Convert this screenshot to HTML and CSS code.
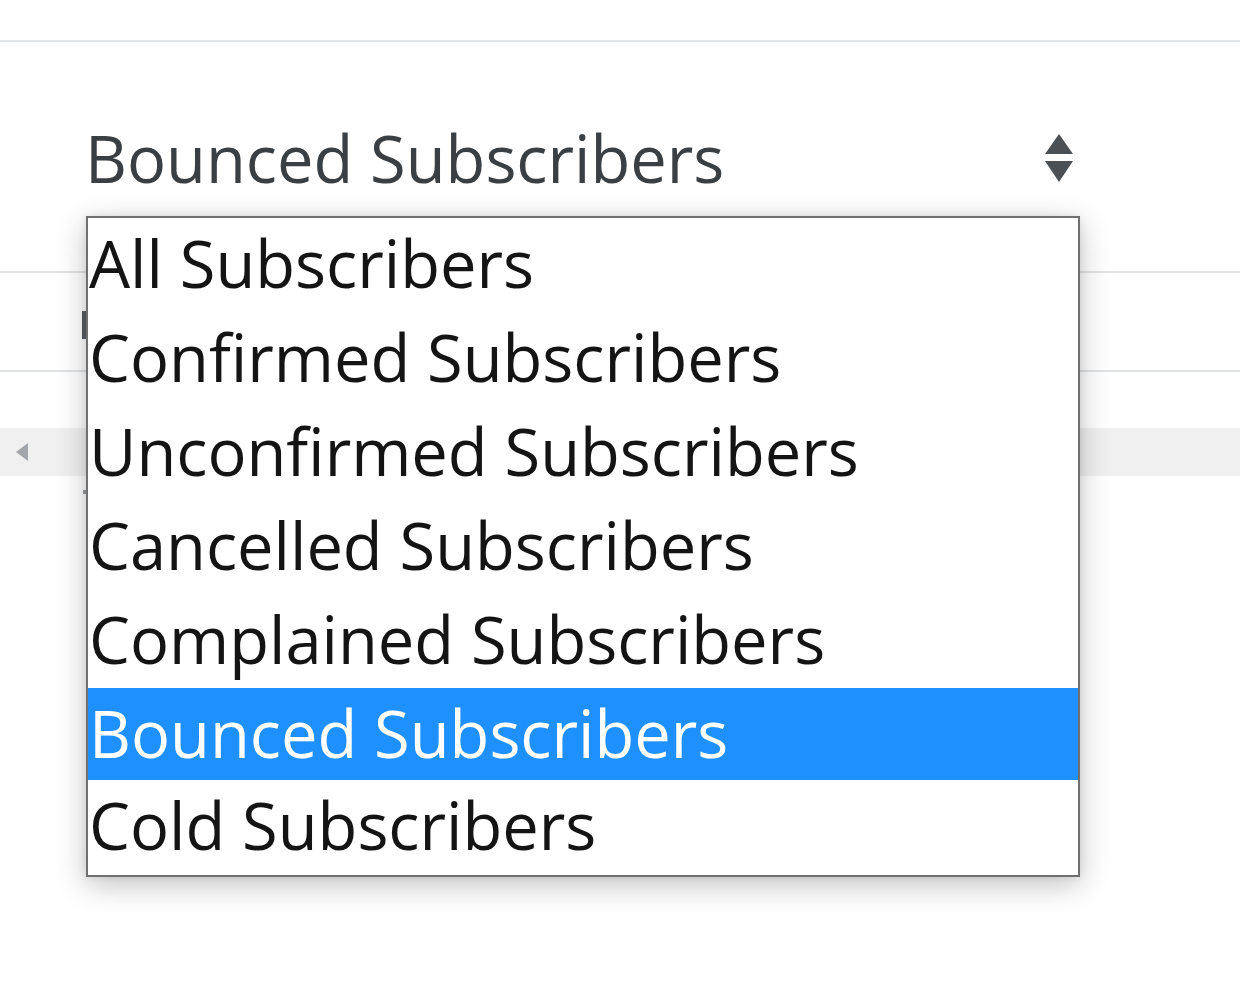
FILE: index.html
```html
<!DOCTYPE html>
<html lang="en">
<head>
  <meta charset="UTF-8">
  <title>Subscribers filter</title>
  <link rel="stylesheet" href="styles.css">
</head>
<body>
<div class="top-bar"></div>

<div class="filter">
  <div class="filter-select">
    <span class="filter-value">Bounced Subscribers</span>
    <svg class="filter-arrows" width="28" height="48" viewBox="0 0 28 48">
      <polygon points="14,0 28,20 0,20" fill="#4b5055"/>
      <polygon points="0,27 28,27 14,48" fill="#4b5055"/>
    </svg>
  </div>

  <ul class="filter-options">
    <li>All Subscribers</li>
    <li>Confirmed Subscribers</li>
    <li>Unconfirmed Subscribers</li>
    <li>Cancelled Subscribers</li>
    <li>Complained Subscribers</li>
    <li class="selected">Bounced Subscribers</li>
    <li>Cold Subscribers</li>
  </ul>
</div>

<div class="table-area">
  <div class="table-row first"></div>
  <div class="table-row second"><span class="caret"></span></div>
  <div class="table-pager">
    <svg class="pager-left" width="12" height="18" viewBox="0 0 12 18">
      <polygon points="12,0 12,18 0,9" fill="#a3a7ab"/>
    </svg>
  </div>
  <div class="table-tick"></div>
</div>
</body>
</html>
```

FILE: styles.css
```css
html, body {
  min-height: 998px;
}
body {
  margin: 0;
  background: #fff;
  font-family: "Open Sans", "DejaVu Sans", sans-serif;
}
.top-bar {
  height: 40px;
  border-bottom: 2px solid #e3e7ea;
}
.filter {
  position: relative;
}
.filter-select {
  display: flex;
  align-items: center;
  justify-content: space-between;
  width: 1080px;
  box-sizing: border-box;
  margin-top: 69px;
  padding: 0 7px 0 85px;
  height: 94px;
  font-size: 65px;
  line-height: 94px;
  color: #3a3f44;
}
.filter-arrows {
  display: block;
}
.filter-options {
  position: absolute;
  top: 105px;
  left: 86px;
  width: 994px;
  box-sizing: border-box;
  margin: 0;
  padding: 0;
  list-style: none;
  background: #fff;
  border: 2px solid #707070;
  box-shadow: 0 8px 28px rgba(0, 0, 0, .24), 0 0 8px rgba(0, 0, 0, .08);
  z-index: 2;
}
.filter-options li {
  height: 94px;
  padding-left: 1px;
  font-size: 65px;
  line-height: 90px;
  color: #141414;
  white-space: nowrap;
}
.filter-options li.selected {
  height: 92px;
  background: #1e90ff;
  color: #fff;
}
.filter-options li:last-child {
  height: 95px;
}
.table-row {
  position: relative;
  border-bottom: 2px solid #e1e4e7;
}
.table-row.first {
  height: 66px;
}
.table-row.second {
  height: 97px;
}
.caret {
  position: absolute;
  left: 82px;
  top: 38px;
  width: 4px;
  height: 28px;
  background: #5a5f64;
}
.table-pager {
  display: flex;
  align-items: center;
  height: 48px;
  margin-top: 56px;
  padding-left: 16px;
  background: #f0f0f0;
}
.pager-left {
  display: block;
}
.table-tick {
  width: 3px;
  height: 4px;
  margin: 14px 0 0 83px;
  background: #9a9ea2;
}
```
